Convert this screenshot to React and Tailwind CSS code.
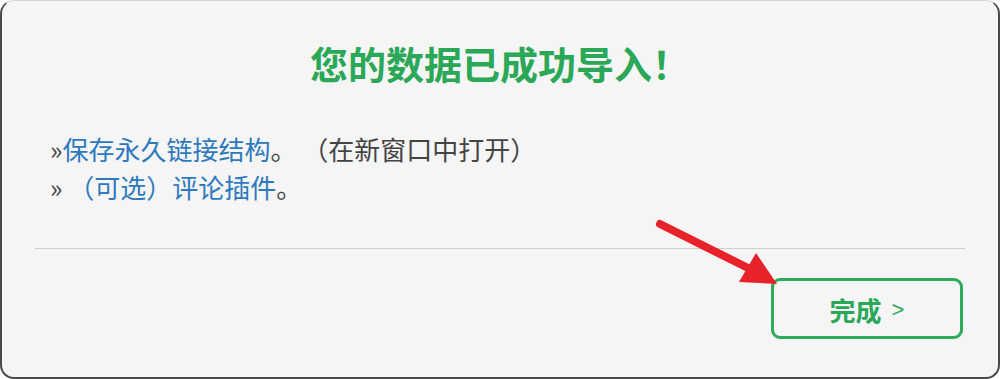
export default function App() {
  const cjk = { fontFamily: '"Noto Sans CJK SC", "Noto Sans", sans-serif' };
  return (
    <div className="w-[1000px] h-[379px] bg-white [text-spacing-trim:space-all]" style={cjk}>
      <div className="relative w-full h-full bg-[#f5f5f5] rounded-[14px] border-2 border-[#4a4a4a] border-t-[#d6d6d6] border-t flex flex-col">
        <h1 className="pt-[38px] h-[86px] leading-[48px] text-center text-[38px] font-bold text-[#2aa858]">
          您的数据已成功导入！
        </h1>
        <div className="mt-[43px] pl-[48px] text-[26px] leading-[38px] text-[#444]">
          <div>
            <span>»</span>
            <span className="text-[#2f79bd]">保存永久链接结构</span>
            <span>。 （在新窗口中打开）</span>
          </div>
          <div>
            <span>» </span>
            <span className="text-[#2f79bd]">（可选）评论插件</span>
            <span>。</span>
          </div>
        </div>
        <div className="mt-[42px] mx-[33px] h-px bg-[#cfcfcf]" />
        <div className="flex justify-end pr-[35px] mt-[29px]">
          <button className="w-[192px] h-[61px] border-[3px] border-[#2eaa5a] rounded-[9px] flex items-center justify-center gap-[10px] pt-[2px] text-[#2aa858]">
            <span className="text-[26px] font-bold">完成</span>
            <span className="text-[22px]" style={{ fontFamily: '"Liberation Sans", sans-serif' }}>&gt;</span>
          </button>
        </div>
        <svg className="absolute left-0 top-0 pointer-events-none" width="1000" height="379" viewBox="0 0 1000 379">
          <line x1="658" y1="223" x2="748" y2="268" stroke="#e8222a" strokeWidth="8" strokeLinecap="round" />
          <polygon points="775,283 737,281 754,252" fill="#e8222a" />
        </svg>
      </div>
    </div>
  );
}
